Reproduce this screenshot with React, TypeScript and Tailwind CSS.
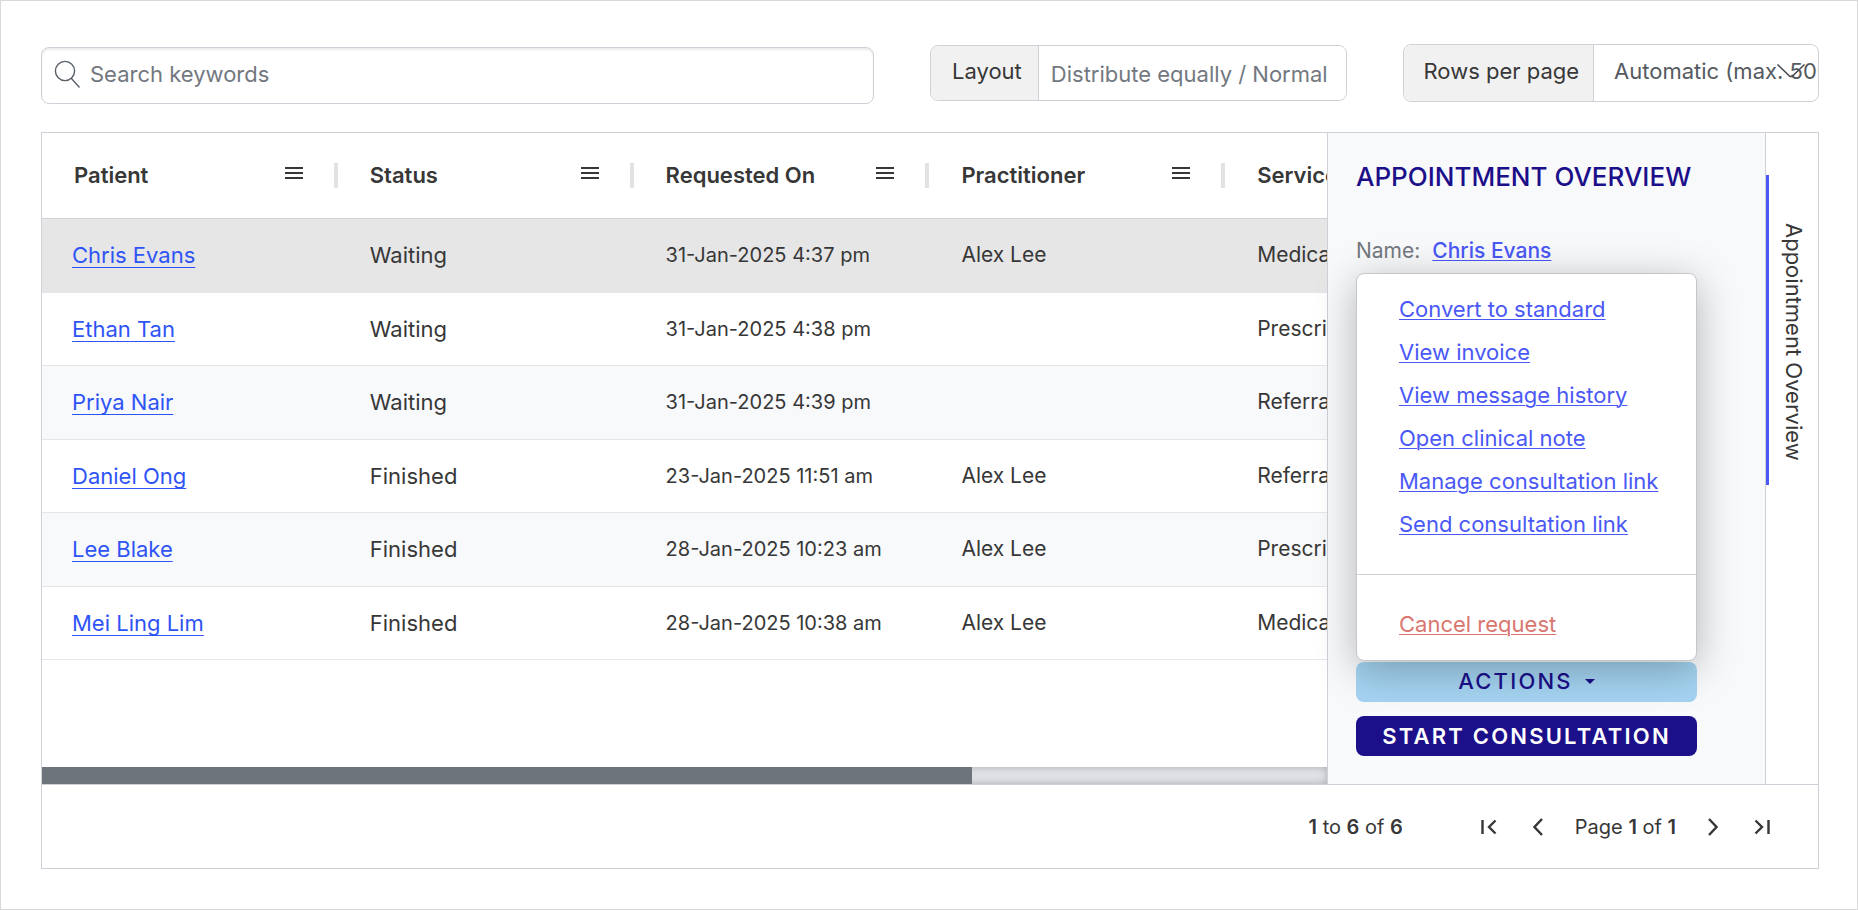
import { useState } from "react";

interface Appointment {
  patient: string;
  status: string;
  requestedOn: string;
  practitioner: string;
  service: string;
}

const appointments: Appointment[] = [
  { patient: "Chris Evans", status: "Waiting", requestedOn: "31-Jan-2025 4:37 pm", practitioner: "Alex Lee", service: "Medical" },
  { patient: "Ethan Tan", status: "Waiting", requestedOn: "31-Jan-2025 4:38 pm", practitioner: "", service: "Prescription" },
  { patient: "Priya Nair", status: "Waiting", requestedOn: "31-Jan-2025 4:39 pm", practitioner: "", service: "Referral" },
  { patient: "Daniel Ong", status: "Finished", requestedOn: "23-Jan-2025 11:51 am", practitioner: "Alex Lee", service: "Referral" },
  { patient: "Lee Blake", status: "Finished", requestedOn: "28-Jan-2025 10:23 am", practitioner: "Alex Lee", service: "Prescription" },
  { patient: "Mei Ling Lim", status: "Finished", requestedOn: "28-Jan-2025 10:38 am", practitioner: "Alex Lee", service: "Medical" },
];

const columns = ["Patient", "Status", "Requested On", "Practitioner", "Service"];

const menuLinks = [
  "Convert to standard",
  "View invoice",
  "View message history",
  "Open clinical note",
  "Manage consultation link",
  "Send consultation link",
];

export default function App() {
  return (
    <div className="min-h-screen flex flex-col border border-[#d9d9d9] bg-white pt-[42px] pr-[38px] pb-10 pl-10 font-['Inter','Liberation_Sans',sans-serif] text-[22px] leading-7 text-[#373737]">
      <Toolbar />
      <main className="mt-7 flex flex-1 flex-col border border-[#ced2d8]">
        <div className="flex flex-1 border-b border-[#ced2d8]">
          <AppointmentTable />
          <OverviewPanel />
          <SideTabs />
        </div>
        <Pagination />
      </main>
    </div>
  );
}

function Toolbar() {
  const [search, setSearch] = useState("");
  const [layout, setLayout] = useState("");

  return (
    <div className="grid grid-cols-[2fr_1fr_1fr] items-center gap-14">
      <label className="mt-1 flex h-[57px] items-center gap-2 rounded-lg border border-[#ced2d8] px-3 shadow-[inset_0_2px_2px_rgba(0,0,0,0.08)]">
        <svg className="h-8 w-7 flex-shrink-0 text-[#5a6068]" viewBox="0 0 28 32" fill="none" stroke="currentColor" strokeWidth="1.4">
          <circle cx="11" cy="11" r="9.6" />
          <path d="M17 18l8.500 9.500" />
        </svg>
        <input
          type="search"
          aria-label="Search keywords"
          placeholder="Search keywords"
          value={search}
          onChange={(e) => setSearch(e.target.value)}
          className="min-w-0 flex-1 bg-transparent pb-1 outline-none placeholder:text-[#73787f]"
        />
      </label>
      <div className="mb-0.5 flex h-14 overflow-hidden rounded-lg border border-[#ced2d8]">
        <label htmlFor="layout" className="flex items-center border-r border-[#ced2d8] bg-[#f1f1f1] pr-4 pb-1 pl-[21px]">
          Layout
        </label>
        <input
          id="layout"
          type="text"
          placeholder="Distribute equally / Normal"
          value={layout}
          onChange={(e) => setLayout(e.target.value)}
          className="min-w-0 flex-1 pt-0.5 pl-3 outline-none placeholder:text-[#73787f]"
        />
      </div>
      <div className="relative mb-0.5 flex h-[58px] overflow-hidden rounded-lg border border-[#ced2d8]">
        <label htmlFor="rows" className="flex flex-shrink-0 items-center border-r border-[#ced2d8] bg-[#f1f1f1] pr-[14px] pb-1 pl-5">
          Rows per page
        </label>
        <select id="rows" className="min-w-0 flex-1 appearance-none bg-transparent pb-1 pl-5 text-[#555a60] outline-none">
          <option>Automatic (max. 500)</option>
          <option>100</option>
        </select>
        <svg className="pointer-events-none absolute top-[18px] right-3 h-4 w-[30px]" viewBox="0 0 30 16" fill="none" stroke="#454a50" strokeWidth="1.5">
          <path d="M1.500 1.500l12.500 12h2L28.500 1.500" />
        </svg>
      </div>
    </div>
  );
}

function AppointmentTable() {
  return (
    <div className="flex min-w-0 flex-1 flex-col">
      <div className="flex-1 overflow-hidden">
        <table className="w-[1479px] table-fixed border-collapse text-left">
          <thead>
            <tr className="h-[85px] border-b border-[#ced2d8]">
              {columns.map((name) => (
                <th key={name} className="p-0 font-semibold">
                  <div className="flex items-center pl-8">
                    <span className="flex-1">{name}</span>
                    <button aria-label={`${name} column menu`} className="mr-[31px] pb-1">
                      <svg className="h-[14px] w-[18px]" viewBox="0 0 18 14" stroke="currentColor" strokeWidth="2">
                        <path d="M0 2h18M0 7h18M0 12h18" />
                      </svg>
                    </button>
                    <span className="h-[25px] w-1 bg-[#e2e2e2]" />
                  </div>
                </th>
              ))}
            </tr>
          </thead>
          <tbody>
            {appointments.map((row, i) => (
              <tr
                key={row.patient}
                className={`border-b border-[#e4e6ea] odd:h-[74px] even:h-[73px] ${
                  i === 0 ? "bg-[#e6e6e6]" : i % 2 === 0 ? "bg-[#f8f9fb]" : "bg-white"
                }`}
              >
                <td className="pl-[30px]">
                  <a href="#" className="text-[#2f54f5] underline decoration-1 underline-offset-4 [text-decoration-skip-ink:none]">
                    {row.patient}
                  </a>
                </td>
                <td className="pl-8">{row.status}</td>
                <td className="pl-8 text-xl">{row.requestedOn}</td>
                <td className="pl-8 text-[21px]">{row.practitioner}</td>
                <td className="pl-8 text-[21px]">{row.service}</td>
              </tr>
            ))}
          </tbody>
        </table>
      </div>
      <div className="h-[17px] bg-[#e1e3e7] shadow-[inset_0_0_8px_rgba(0,0,0,0.25)]">
        <div className="h-full w-[72.4%] bg-[#6d747c]" />
      </div>
    </div>
  );
}

function OverviewPanel() {
  const [open, setOpen] = useState(true);

  return (
    <aside className="flex w-[438px] flex-shrink-0 flex-col border-l border-[#ced2d8] bg-[#f8f9fb] pr-[68px] pb-7 pl-7">
      <h2 className="mt-7 text-[26px] leading-8 font-medium whitespace-nowrap text-[#1b0f8a]">APPOINTMENT OVERVIEW</h2>
      <p className="mt-11 flex gap-3 text-[21px] text-[#73787f]">
        Name:
        <a href="#" className="font-medium text-[#4a58f5] underline decoration-1 underline-offset-2">
          Chris Evans
        </a>
      </p>
      <div className="relative mt-auto">
        {open && (
          <div className="absolute bottom-full left-0 mb-px w-full rounded-lg border border-[#c4c6ca] bg-white shadow-[0_8px_40px_rgba(0,0,0,0.28)]">
            <ul className="flex flex-col gap-[15px] px-[42px] pt-[21px] pb-9">
              {menuLinks.map((label) => (
                <li key={label} className="flex">
                  <a href="#" className="whitespace-nowrap text-[#4a58f5] underline decoration-1 underline-offset-2">
                    {label}
                  </a>
                </li>
              ))}
            </ul>
            <div className="border-t border-[#ced2d8] px-[42px] pt-[35px] pb-[22px]">
              <a href="#" className="text-[#d97670] underline decoration-1 underline-offset-2">
                Cancel request
              </a>
            </div>
          </div>
        )}
        <button
          onClick={() => setOpen(!open)}
          className="flex h-10 w-full items-center justify-center gap-3 rounded-lg bg-[#a4d3f1] pb-0.5 font-medium tracking-widest text-[#1b0f8a]"
        >
          ACTIONS
          <svg className="h-[5px] w-[10px]" viewBox="0 0 10 5" fill="currentColor">
            <path d="M0 0h10L5 5z" />
          </svg>
        </button>
      </div>
      <button className="mt-[14px] h-10 w-full rounded-lg bg-[#1b0f8a] font-semibold tracking-widest whitespace-nowrap text-white">
        START CONSULTATION
      </button>
    </aside>
  );
}

function SideTabs() {
  return (
    <div className="w-[53px] flex-shrink-0 border-l border-[#ced2d8] pt-[42px]">
      <button className="flex h-[310px] w-full items-center justify-center border-l-3 border-[#4a58f5] pt-6">
        <span className="whitespace-nowrap [writing-mode:vertical-rl]">Appointment Overview</span>
      </button>
    </div>
  );
}

function Pagination() {
  return (
    <div className="flex h-[83px] items-center justify-end pr-12 text-xl">
      <span className="mr-[78px]">
        <b className="font-semibold">1</b> to <b className="font-semibold">6</b> of <b className="font-semibold">6</b>
      </span>
      <button aria-label="First page">
        <svg className="h-4 w-4" viewBox="0 0 16 16" fill="none" stroke="currentColor" strokeWidth="2.400">
          <path d="M1.500 1v14M14.500 1.500L8 8l6.500 6.500" />
        </svg>
      </button>
      <button aria-label="Previous page" className="ml-9">
        <svg className="h-[18px] w-[10px]" viewBox="0 0 10 18" fill="none" stroke="currentColor" strokeWidth="2.400">
          <path d="M9 1L1.500 9L9 17" />
        </svg>
      </button>
      <span className="mx-8">
        Page <b className="font-semibold">1</b> of <b className="font-semibold">1</b>
      </span>
      <button aria-label="Next page">
        <svg className="h-[18px] w-[10px]" viewBox="0 0 10 18" fill="none" stroke="currentColor" strokeWidth="2.400">
          <path d="M1 1l7.500 8L1 17" />
        </svg>
      </button>
      <button aria-label="Last page" className="ml-9">
        <svg className="h-4 w-4" viewBox="0 0 16 16" fill="none" stroke="currentColor" strokeWidth="2.400">
          <path d="M14.500 1v14M1.500 1.500L8 8l-6.500 6.500" />
        </svg>
      </button>
    </div>
  );
}
